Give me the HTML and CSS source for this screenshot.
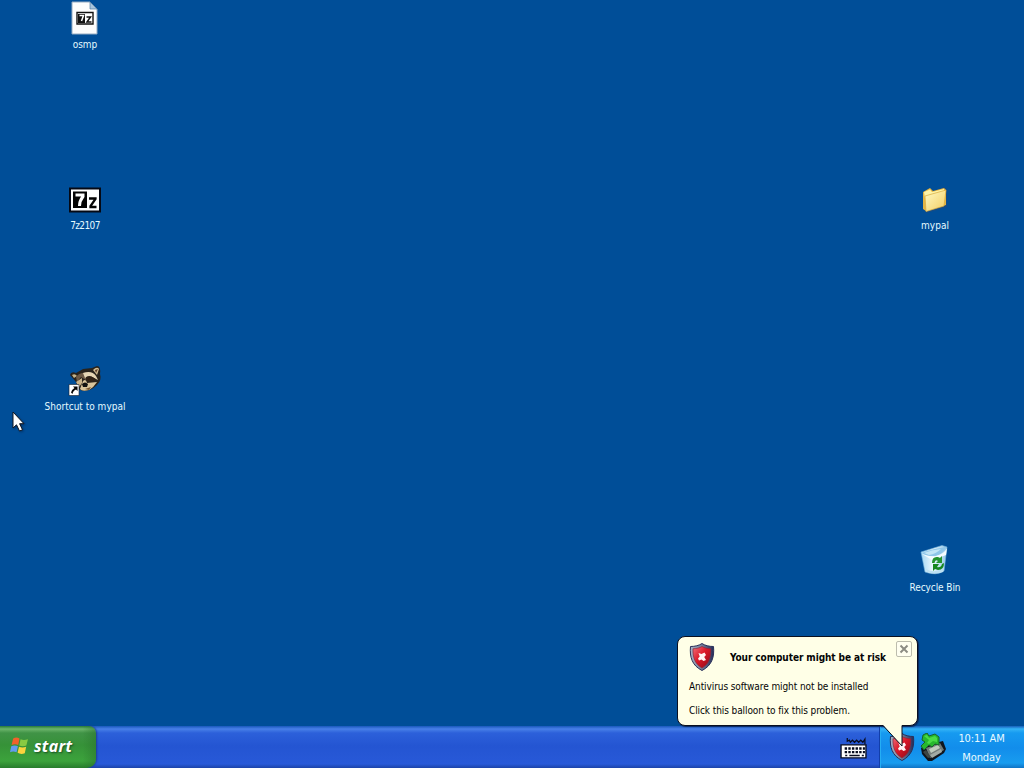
FILE: index.html
```html
<!DOCTYPE html>
<html lang="en">
<head>
<meta charset="utf-8">
<title>Desktop</title>
<link rel="stylesheet" href="styles.css">
</head>
<body>
<svg class="defs" width="0" height="0" aria-hidden="true">
  <defs>
    <linearGradient id="red" x1="0" y1="0" x2="1" y2="1"><stop offset="0" stop-color="#f0707a"/><stop offset=".45" stop-color="#dc1828"/><stop offset="1" stop-color="#8c0818"/></linearGradient>
    <linearGradient id="rim" x1="0" y1="0" x2="1" y2="0"><stop offset="0" stop-color="#aab2c4"/><stop offset=".5" stop-color="#727c98"/><stop offset="1" stop-color="#252c58"/></linearGradient>
    <linearGradient id="gold" x1="0" y1="0" x2="1" y2="1"><stop offset="0" stop-color="#fffac4"/><stop offset="1" stop-color="#f2cd62"/></linearGradient>
    <linearGradient id="bin" x1="0" y1="0" x2="1" y2="0"><stop offset="0" stop-color="#a6d8f4"/><stop offset=".45" stop-color="#eaf7fd"/><stop offset="1" stop-color="#92c6e8"/></linearGradient>
    <symbol id="shield" viewBox="0 0 26 28">
      <path d="M13 .5C10 2.500 6 3.500 1.500 3.500C.5 14 3 22.500 13 27.500C23 22.500 25.500 14 24.500 3.500C20 3.500 16 2.500 13 .5Z" fill="url(#rim)" stroke="#29305a"/>
      <path d="M13 3.500C10.500 5 8 5.500 4 5.800C3.700 14.500 6 21 13 25C20 21 22 14.500 21.700 5.800C18 5.500 15.500 5 13 3.500Z" fill="url(#red)" stroke="#8d2638" stroke-width=".7"/>
      <path d="M9.500 10L12.500 11L15.500 9.500L17 12L15.200 14L17 17L14.500 18L12.500 16.500L10 17.500L9 15.500L10.700 13.500Z" fill="#fff4f4"/>
    </symbol>
  </defs>
</svg>
<main class="desktop">
  <div class="item osmp">
    <svg class="icon" viewBox="0 0 32 32"><path d="M3 0H21L28 7V32H3Z" fill="#fdfdfd" stroke="#95abc2"/><path d="M21 0V7H28Z" fill="#a8c5dd" stroke="#547ba2" stroke-width=".7"/><path d="M8 10.500H24V22H8Z" fill="#fff" stroke="#111" stroke-width="1.400"/><path d="M9 12H16V21H9Z" fill="#111"/><path d="M10.500 13.500H14.500L12.500 19" fill="none" stroke="#fff" stroke-width="1.500"/><path d="M17.500 15H21.500L18 20H22.500" fill="none" stroke="#111" stroke-width="1.500"/></svg>
    <span class="label l-osmp">osmp</span>
  </div>
  <div class="item seven">
    <svg class="icon" viewBox="0 0 32 32"><path d="M1 5.500H31V28.500H1Z" fill="#fff" stroke="#050914" stroke-width="2"/><path d="M4 8.500H18V25H4Z" fill="#050505"/><path d="M6.500 12H14V13.500C12 16 10.500 19 10.500 23" fill="none" stroke="#fff" stroke-width="3"/><path d="M20 15.500H26.500V16L21.500 23V24H27.500" fill="none" stroke="#050505" stroke-width="2.300"/></svg>
    <span class="label l-seven">7z2107</span>
  </div>
  <div class="item shortcut">
    <svg class="icon" viewBox="0 0 32 32">
      <path d="M1 11Q2 7 7 9L14 5L23 4L28 2Q32 2 31 10Q33 16 28 21Q22 27 14 27L9 25L7 18Z" fill="#29231c"/>
      <path d="M3 11Q6 9 8 12L5 14Z" fill="#c5b48b"/><path d="M24 6Q28 2 30 5L28 11Z" fill="#d2bd94"/><path d="M26 6L29 5L27 9Z" fill="#5b3e2c"/>
      <path d="M7 13Q11 8 18 9L17 16L12 13L8 18Z" fill="#6c5945"/>
      <path d="M14 9Q23 6 27 12L29 16L25 14Q20 10 16 14Z" fill="#e6d5b4"/>
      <path d="M7 18L13 14L13 19L10 23Z" fill="#c9b38b"/>
      <path d="M17 13Q24 11 27 16Q23 19 18 17Z" fill="#322215"/>
      <path d="M14 17Q17 14 18 19L28 18Q25 23 20 26Q13 28 11 25Z" fill="#d9c49b"/><path d="M13 20Q16 17 19 20L18 23L14 23Z" fill="#111"/><path d="M16 25L22 23L20 26Z" fill="#74542f"/>
      <path d="M0 20.500H10V31.500H0Z" fill="#fff" stroke="#17202c" stroke-width=".6"/><path d="M4 22.500H8.500V27L7 25.500Q4 26.500 3.500 30L2 28.500Q2.500 25.500 5.500 24Z" fill="#050505"/>
    </svg>
    <span class="label l-shortcut">Shortcut to mypal</span>
  </div>
  <div class="item folder">
    <svg class="icon" viewBox="0 0 32 32"><path d="M5 9L13 6L15 8L26 4L28 6V24L8 30L5 27Z" fill="#25497a" opacity=".55"/><path d="M4 9L11 5L14 8L25 5L27 7V22L7 28L4 26Z" fill="#e4b544"/><path d="M5 9L11 6.500L13 9L25 6V10L6 15Z" fill="#fff4a6"/><path d="M6 13L27 7L25 23L7 28.500Z" fill="url(#gold)" stroke="#d9ab3e" stroke-width=".7"/></svg>
    <span class="label l-folder">mypal</span>
  </div>
  <div class="item bin">
    <svg class="icon" viewBox="0 0 32 32"><path d="M2 7L23 .5L28 2L25 26Q17 31 6 27Z" fill="url(#bin)" stroke="#76b4dc" stroke-width=".6"/><path d="M3 8Q12 4 27 2Q24 9 17 11Q8 12 3 8Z" fill="#8fc6e9"/><path d="M5 8Q12 5 22 4Q17 9 10 10Z" fill="#c3e6f7"/><path d="M3 9Q11 12 17 11Q25 9 28 3L27 10Q20 13 13 15Z" fill="#f5fcff"/><path d="M7 24Q16 29 25 23L24 27Q16 30 8 27Z" fill="#bce0f2"/><path d="M13 18Q13 11 19 12L21 13L23 11V18H17L19 16Q16 14 15.500 18Z" fill="#25942e"/><path d="M25 18Q25 25 19 25L16 24L14 26V19H20L18 22Q22 23 23 19Z" fill="#16871f"/></svg>
    <span class="label l-bin">Recycle Bin</span>
  </div>
  <svg class="cursor" viewBox="0 0 14 22"><path d="M1 1V17L4.500 13.800L7.500 20L10.500 18.800L7.600 12.700H12Z" fill="#fff" stroke="#101620" stroke-width="1"/></svg>
</main>
<footer class="taskbar">
  <button class="start">
    <svg class="flag" viewBox="0 0 18 18"><path d="M3 2Q6 0 9 2L7.800 8Q5 6.500 1.500 8Z" fill="#f1612b"/><path d="M10 2.500Q13 4 17 2.500L15.500 8.500Q12 10 8.800 8.500Z" fill="#89ca42"/><path d="M1.200 9.200Q4.500 7.800 7.500 9.200L6.200 15Q3 13.500 0 15Z" fill="#639bf0"/><path d="M8.500 9.700Q12 11 15.300 9.700L14 15.800Q10.500 17.500 7.200 15.500Z" fill="#fbd33d"/></svg>
    <span class="start-text">start</span>
  </button>
  <svg class="keyboard" viewBox="0 0 26 22"><path d="M7 1V4L9 3L10 5L12 3L14 5L16 3L18 5L20 3L22 5L24 2V7" fill="none" stroke="#080d20" stroke-width="1.200"/><path d="M1 7.500H25V20H1Z" fill="#fff" stroke="#080d20" stroke-width="1.300"/><path d="M4.500 11H24M4.500 14.500H24" stroke="#080d20" stroke-width="2.200" stroke-dasharray="2.300 1.200"/><path d="M5 17.700H7M9 17.700H19M21 17.700H23" stroke="#080d20" stroke-width="1.300"/></svg>
  <div class="tray">
    <svg class="tray-shield"><use href="#shield"/></svg>
    <svg class="device" viewBox="0 0 27 29"><path d="M1 15L11 11L23 8L26 16L24 20L12 28L8 28L2 21Z" fill="#10151d"/><path d="M6 15L20 10L24 17L10 25Z" fill="#737c79"/><path d="M9 16L18 12L20 15L11 20Z" fill="#c1ccbd"/><path d="M10 22L21 16L22 19L12 25Z" fill="#a2aaa4"/><path d="M3 19L8 25L11 24L6 17Z" fill="#3d4544"/><path d="M3 2L7 0L9 3L15 1L19 4V12L15 11L12 14L9 12L4 17L1 13L5 9L2 7Z" fill="#27b72d" stroke="#17622b"/><path d="M4 3L7 2L9 5L15 3L17 5V9L13 8L9 11L7 10L9 7Z" fill="#49dc45"/></svg>
    <div class="clock"><span class="time">10:11 AM</span><span class="day">Monday</span></div>
  </div>
</footer>
<aside class="balloon">
  <header class="balloon-head"><svg class="head-shield"><use href="#shield"/></svg><strong class="title">Your computer might be at risk</strong><button class="close" aria-label="Close"><svg viewBox="0 0 14 14"><path d="M3.500 3.500L10.500 10.500M10.500 3.500L3.500 10.500" stroke="#8c8c83" stroke-width="2"/></svg></button></header>
  <p class="line first">Antivirus software might not be installed</p>
  <p class="line second">Click this balloon to fix this problem.</p>
  <svg class="tail" viewBox="0 0 24 24"><path d="M1 0V1L20 22V1L20 0Z" fill="#ffffe7"/><path d="M1 1.500L20 22V1.500" fill="none" stroke="#0a1020"/></svg>
</aside>
</body>
</html>
```
FILE: styles.css
```css
* { box-sizing: border-box; }
body { margin: 0; width: 1024px; height: 768px; overflow: hidden; position: relative; display: flex; flex-direction: column; background: #004e98; font: 10px/14px "DejaVu Sans Condensed", "DejaVu Sans", sans-serif; font-stretch: condensed; }
svg { display: block; }
button { border: 0; padding: 0; }
.defs { position: absolute; }
.desktop { flex: 1; position: relative; }
.item { position: absolute; width: 110px; display: flex; flex-direction: column; align-items: center; gap: 4px; color: #e4faff; }
.icon { width: 32px; height: 32px; overflow: visible; }
.label { white-space: nowrap; }
.l-seven { letter-spacing: -.6px; }
.l-bin { letter-spacing: -.08px; }
.osmp { left: 30px; top: 2px; }
.seven { left: 30px; top: 183px; }
.shortcut { left: 30px; top: 364px; }
.folder { left: 880px; top: 183px; }
.bin { left: 880px; top: 545px; }
.cursor { position: absolute; left: 12px; top: 411px; width: 14px; height: 22px; filter: drop-shadow(1px 1px 1px #00336a); }
.taskbar { height: 42px; display: flex; align-items: center; background: linear-gradient(#1958bd 0, #4880e8 3px, #2c60da 7px, #2455d2 20px, #2859d8 38px, #1c43a9 100%); }
.start { width: 96px; height: 42px; display: flex; align-items: center; padding: 0 0 3px 10px; gap: 5px; border-radius: 0 7px 9px 0; background: linear-gradient(90deg, transparent 86%, #2a752d88), linear-gradient(#247b39 0, #6cb56b 3px, #409346 7px, #369238 19px, #3ca33c 35px, #277c2c 100%); box-shadow: 1px 0 2px #1c3e98; color: white; }
.flag { width: 19px; height: 20px; }
.start-text { padding-top: 1px; font: italic bold 16px/22px "Open Sans", sans-serif; letter-spacing: .25px; text-shadow: 1px 1px 2px #164d21; }
.keyboard { width: 27px; height: 23px; margin: 3px 12px 0 auto; }
.tray { width: 145px; height: 42px; display: flex; align-items: center; padding-left: 9px; background: linear-gradient(#175ebb 0, #34b3f6 3px, #169af0 7px, #128deb 22px, #189cef 37px, #0f73c5 100%); border-left: 1px solid #123eaa; box-shadow: inset 1px 0 #25aef4; }
.tray-shield { width: 26px; height: 28px; }
.device { width: 27px; height: 29px; margin-left: 5px; }
.clock { flex: 1; height: 42px; display: flex; flex-direction: column; align-items: center; padding: 6px 8px 0 0; gap: 5px; color: #e7faff; font-size: 11px; letter-spacing: -.1px; }
.balloon { position: absolute; left: 677px; top: 636px; width: 241px; height: 90px; border: 1px solid #0a1020; border-radius: 8px; padding: 4px 5px 0 11px; background: #ffffe7; color: #050505; box-shadow: 1px 1px 1px #0a275b; }
.balloon-head { height: 32px; display: flex; align-items: center; }
.head-shield { width: 28px; height: 28px; margin-left: -1px; }
.title { margin-left: 14px; padding-top: 2px; white-space: nowrap; letter-spacing: -.08px; }
.close { width: 16px; height: 16px; margin: -16px 0 0 auto; background: #fffff0; border: 1px solid #bdbdad; border-radius: 2px; }
.line { margin: 0; white-space: nowrap; letter-spacing: -.09px; }
.first { margin-top: 7px; }
.second { margin-top: 10px; }
.tail { position: absolute; left: 204px; top: 87px; width: 24px; height: 24px; }
```
